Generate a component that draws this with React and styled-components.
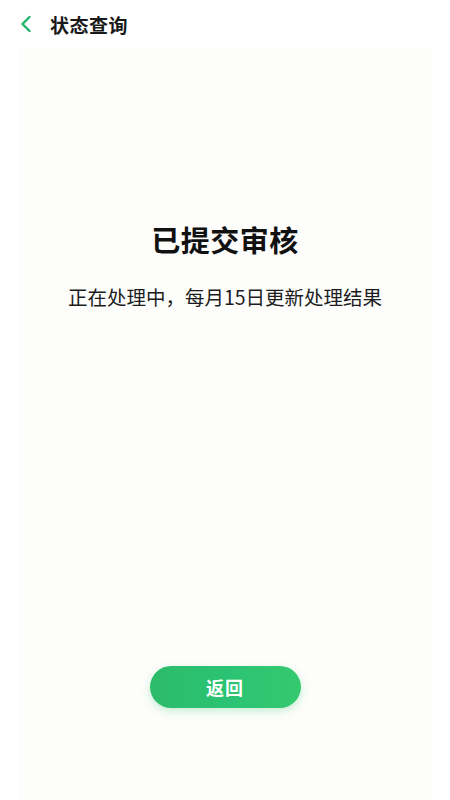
import React from "react";
import styled, { createGlobalStyle } from "styled-components";

const GlobalStyle = createGlobalStyle`
  html, body {
    margin: 0;
    padding: 0;
    background: #ffffff;
  }
  body {
    font-family: "Noto Sans CJK SC", "Noto Sans", sans-serif;
  }
`;

const Page = styled.div`
  width: 450px;
  height: 800px;
  display: flex;
  flex-direction: column;
  background: #ffffff;
  overflow: hidden;
`;

const Header = styled.div`
  height: 48px;
  display: flex;
  align-items: center;
  padding: 0 0 0 16px;
  gap: 14px;
  background: #ffffff;
`;

const BackButton = styled.button`
  width: 20px;
  height: 24px;
  border: none;
  background: none;
  padding: 0;
  display: flex;
  align-items: center;
  justify-content: center;
  cursor: pointer;
`;

const HeaderTitle = styled.h1`
  margin: 0;
  font-size: 19px;
  font-weight: 700;
  color: #1a1a1a;
  letter-spacing: 0.5px;
`;

const Body = styled.div`
  flex: 1;
  margin: 0 18px;
  background: #fdfdfb;
  display: flex;
  flex-direction: column;
  align-items: center;
  padding-top: 170px;
`;

const StatusTitle = styled.h2`
  margin: 0;
  font-size: 29px;
  font-weight: 700;
  color: #111111;
  line-height: 42px;
  letter-spacing: 0.5px;
`;

const StatusText = styled.p`
  margin: 23px 0 0;
  font-size: 19.5px;
  font-weight: 400;
  color: #1c1c1c;
  line-height: 28px;
`;

const Spacer = styled.div`
  flex: 1;
`;

const ReturnButton = styled.button`
  width: 151px;
  height: 42px;
  margin-bottom: 92px;
  border: none;
  border-radius: 21px;
  background: linear-gradient(90deg, #2cbb69 0%, #2bc474 55%, #35c96e 100%);
  box-shadow: 0 3px 8px rgba(46, 196, 110, 0.28);
  color: #ffffff;
  font-family: "Noto Sans CJK SC", sans-serif;
  font-size: 18px;
  font-weight: 700;
  letter-spacing: 1px;
  cursor: pointer;
`;

const ChevronLeft = () => (
  <svg width="14" height="18" viewBox="0 0 14 18" fill="none">
    <path
      d="M10.5 2L3.5 9L10.5 16"
      stroke="#21b36c"
      strokeWidth="2.4"
      strokeLinecap="round"
      strokeLinejoin="round"
    />
  </svg>
);

export default function App() {
  return (
    <Page>
      <GlobalStyle />
      <Header>
        <BackButton aria-label="返回">
          <ChevronLeft />
        </BackButton>
        <HeaderTitle>状态查询</HeaderTitle>
      </Header>
      <Body>
        <StatusTitle>已提交审核</StatusTitle>
        <StatusText>正在处理中，每月15日更新处理结果</StatusText>
        <Spacer />
        <ReturnButton>返回</ReturnButton>
      </Body>
    </Page>
  );
}
